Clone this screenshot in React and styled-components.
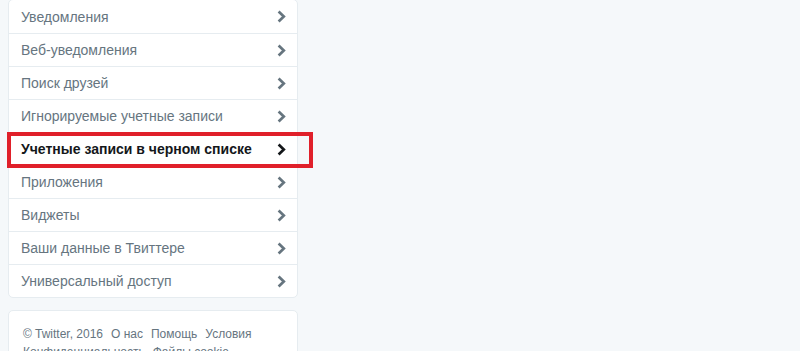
import React from 'react';
import styled, { createGlobalStyle } from 'styled-components';

const GlobalStyle = createGlobalStyle`
  html, body {
    margin: 0;
    padding: 0;
    background: #f5f8fa;
  }
  body {
    font-family: Arial, "Liberation Sans", sans-serif;
  }
`;

const Page = styled.div`
  padding: 0 8px;
  width: 290px;
`;

const Card = styled.ul`
  list-style: none;
  margin: -1px 0 0;
  padding: 0;
  background: #fff;
  border: 1px solid #e6ecf0;
  border-radius: 5px;
  position: relative;
`;

const Row = styled.li`
  position: relative;
  display: flex;
  align-items: center;
  justify-content: space-between;
  box-sizing: border-box;
  height: 33px;
  padding: 0 11px 0 12px;
  border-top: ${({ $first }) => ($first ? 'none' : '1px solid #e6ecf0')};
  font-size: 14px;
  color: ${({ $active }) => ($active ? '#14171a' : '#66757f')};
  font-weight: ${({ $active }) => ($active ? 'bold' : 'normal')};
  cursor: pointer;
`;

const Highlight = styled.div`
  position: absolute;
  z-index: 1;
  left: -2px;
  top: -1px;
  width: 306px;
  height: 36px;
  box-sizing: border-box;
  border: 4px solid #e0202a;
  pointer-events: none;
`;

const Footer = styled.div`
  margin-top: 12px;
  background: #fff;
  border: 1px solid #e6ecf0;
  border-radius: 5px;
  padding: 14px 14px 15px;
  font-size: 12px;
  line-height: 18px;
  color: #66757f;
`;

const FooterLink = styled.span`
  margin-right: 8px;
  white-space: nowrap;
  display: inline-block;
`;

const Chevron = ({ dark }) => (
  <svg width="9" height="13" viewBox="0 0 9 13">
    <path
      d="M1.6 1.5 L6.8 6.5 L1.6 11.5"
      fill="none"
      stroke={dark ? '#14171a' : '#66757f'}
      strokeWidth="2.7"
    />
  </svg>
);

const items = [
  'Уведомления',
  'Веб-уведомления',
  'Поиск друзей',
  'Игнорируемые учетные записи',
  'Учетные записи в черном списке',
  'Приложения',
  'Виджеты',
  'Ваши данные в Твиттере',
  'Универсальный доступ',
];

const links = ['© Twitter, 2016', 'О нас', 'Помощь', 'Условия', 'Конфиденциальность', 'Файлы cookie'];

const App = () => (
  <Page>
    <GlobalStyle />
    <Card>
      {items.map((item, i) => {
        const active = i === 4;
        return (
          <Row key={item} $first={i === 0} $active={active}>
            <span>{item}</span>
            <Chevron dark={active} />
            {active && <Highlight />}
          </Row>
        );
      })}
    </Card>
    <Footer>
      {links.map(l => (
        <FooterLink key={l}>{l}</FooterLink>
      ))}
    </Footer>
  </Page>
);

export default App;
